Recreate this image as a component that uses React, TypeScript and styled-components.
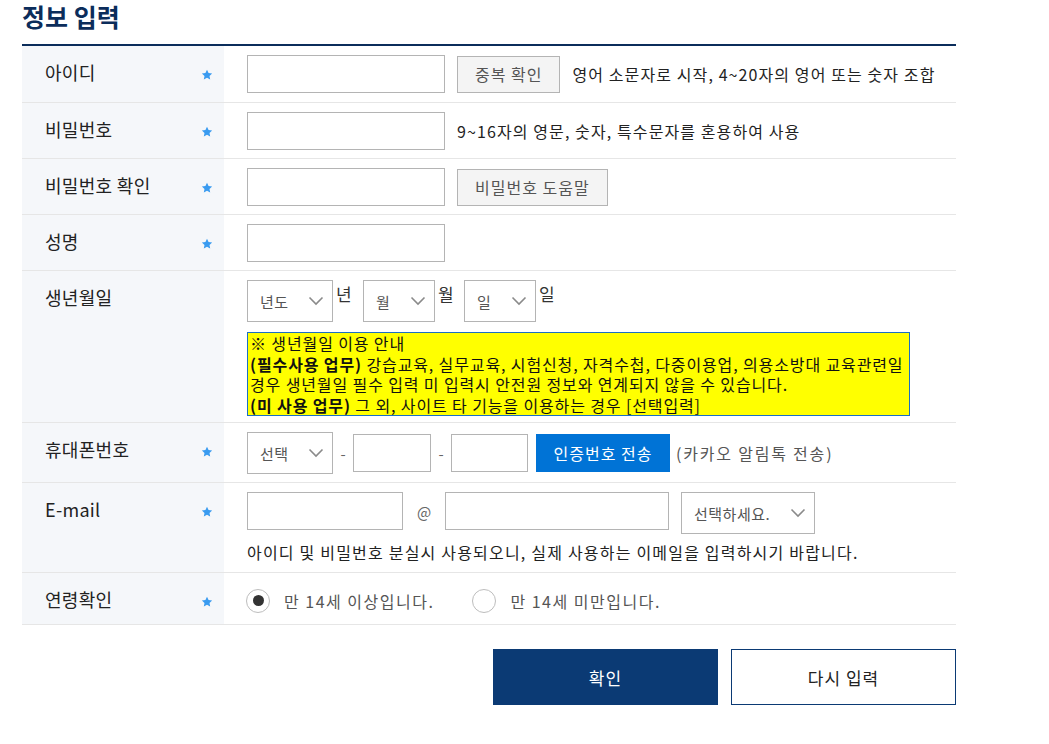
import React from 'react';
import styled, { createGlobalStyle } from 'styled-components';

const GlobalStyle = createGlobalStyle`
  html, body { margin: 0; padding: 0; background: #fff; }
  body {
    font-family: "Noto Sans CJK KR", "Noto Sans", sans-serif;
    color: #222;
  }
  * { box-sizing: border-box; }
`;

const Page = styled.div`
  width: 934px;
  margin-left: 22px;
`;

const Title = styled.h2`
  margin: 0;
  padding-top: 1px;
  font-size: 25px;
  font-weight: 700;
  line-height: 31px;
  color: #0b2d5b;
  margin-bottom: 12px;
`;

const Table = styled.div`
  border-top: 2px solid #0b2d5b;
`;

const Row = styled.div<{ h: number }>`
  display: flex;
  height: ${(p) => p.h}px;
  border-bottom: 1px solid #e6e6e6;
`;

const Label = styled.div`
  width: 202px;
  flex-shrink: 0;
  background: #f5f7fa;
  display: flex;
  justify-content: space-between;
  align-items: flex-start;
  padding: 15px 11px 0 23px;
  font-size: 18px;
  letter-spacing: 0.3px;
  line-height: 22px;
  color: #222;
`;

const Star = styled.span`
  display: flex;
  margin-top: 8px;
`;

const Cell = styled.div`
  flex: 1;
  padding: 9px 0 0 23px;
  display: flex;
  flex-direction: column;
  gap: 10px;
`;

const Line = styled.div`
  display: flex;
  align-items: center;
  gap: 12px;
`;

const Input = styled.div<{ w: number }>`
  width: ${(p) => p.w}px;
  height: 38px;
  border: 1px solid #b4b4b4;
  background: #fff;
  flex-shrink: 0;
`;

const GreyButton = styled.div`
  height: 37px;
  padding: 0 17px;
  border: 1px solid #b4b4b4;
  background: #f4f4f4;
  color: #555;
  font-size: 16px;
  letter-spacing: 1px;
  display: flex;
  align-items: center;
`;

const BlueButton = styled.div`
  height: 38px;
  width: 134px;
  margin-left: 8px;
  background: #0073d6;
  color: #fff;
  font-size: 16px;
  letter-spacing: 1px;
  display: flex;
  align-items: center;
  justify-content: center;
`;

const SelectBox = styled.div<{ w: number }>`
  width: ${(p) => p.w}px;
  height: 42px;
  border: 1px solid #b4b4b4;
  background: #fff;
  display: flex;
  align-items: center;
  justify-content: space-between;
  padding: 0 8px 0 12px;
  font-size: 15px;
  letter-spacing: 0.5px;
  color: #555;
  flex-shrink: 0;
`;

const DateLine = styled.div`
  display: flex;
  align-items: flex-start;
`;

const Unit = styled.span<{ w: number }>`
  width: ${(p) => p.w}px;
  padding-left: 3px;
  font-size: 17px;
  line-height: 28px;
  color: #333;
`;

const Notice = styled.div`
  width: 663px;
  background: #ffff00;
  border: 1px solid #1a6fc4;
  padding: 0 2px;
  font-size: 16px;
  letter-spacing: 0.88px;
  line-height: 20.5px;
  white-space: nowrap;
  color: #111;
  b { font-weight: 700; }
`;

const Dash = styled.span<{ w?: number }>`
  color: #666;
  font-size: 15px;
  width: ${(p) => p.w || 20}px;
  text-align: center;
  flex-shrink: 0;
`;

const At = styled(Dash)`
  line-height: 40px;
`;

const Note = styled.span<{ grey?: boolean }>`
  font-size: 16px;
  letter-spacing: ${(p) => (p.grey ? '1.8px' : '1.1px')};
  color: ${(p) => (p.grey ? '#555' : '#222')};
  white-space: nowrap;
`;

const Hint = styled(Note)`
  margin-left: 6px;
`;

const EmailHint = styled(Note)`
  margin-top: -4px;
  letter-spacing: 1.2px;
`;

const RadioGroup = styled.div`
  display: flex;
  align-items: center;
  height: 29px;
  margin-top: 4px;
  margin-left: -1px;
`;

const RadioItem = styled.label`
  display: flex;
  align-items: center;
  gap: 14px;
  font-size: 16px;
  letter-spacing: 1.5px;
  color: #555;
  margin-right: 38px;
`;

const RadioCircle = styled.span<{ checked?: boolean }>`
  width: 24px;
  height: 24px;
  border-radius: 50%;
  border: 1px solid #bdbdbd;
  display: flex;
  align-items: center;
  justify-content: center;
  &::after {
    content: '';
    width: 11px;
    height: 11px;
    border-radius: 50%;
    background: ${(p) => (p.checked ? '#333' : 'transparent')};
  }
`;

const Actions = styled.div`
  display: flex;
  justify-content: flex-end;
  gap: 13px;
  margin-top: 24px;
`;

const ActionButton = styled.div<{ primary?: boolean }>`
  width: 225px;
  height: 56px;
  display: flex;
  align-items: center;
  justify-content: center;
  font-size: 17px;
  letter-spacing: 1px;
  background: ${(p) => (p.primary ? '#0b3a74' : '#fff')};
  color: ${(p) => (p.primary ? '#fff' : '#222')};
  border: 1px solid #0b3a74;
`;

const StarIcon = () => (
  <svg width="12" height="12" viewBox="0 0 24 24">
    <path
      d="M12 1.5l3.1 6.6 7.2.9-5.3 5 1.4 7.1L12 17.6l-6.4 3.5L7 14l-5.3-5 7.2-.9z"
      fill="#3a9bf0"
    />
  </svg>
);

const Chevron = () => (
  <svg width="16" height="10" viewBox="0 0 16 10">
    <path d="M1.5 1.5l6.5 6.5 6.5-6.5" fill="none" stroke="#8a8a8a" strokeWidth="1.6" />
  </svg>
);

const Select: React.FC<{ w: number; text: string }> = ({ w, text }) => (
  <SelectBox w={w}>
    <span>{text}</span>
    <Chevron />
  </SelectBox>
);

const FieldLabel: React.FC<{ text: string; required?: boolean }> = ({ text, required = true }) => (
  <Label>
    <span>{text}</span>
    {required && (
      <Star>
        <StarIcon />
      </Star>
    )}
  </Label>
);

export default function App() {
  return (
    <Page>
      <GlobalStyle />
      <Title>정보 입력</Title>
      <Table>
        <Row h={57}>
          <FieldLabel text="아이디" />
          <Cell>
            <Line>
              <Input w={198} />
              <GreyButton>중복 확인</GreyButton>
              <Note>영어 소문자로 시작, 4~20자의 영어 또는 숫자 조합</Note>
            </Line>
          </Cell>
        </Row>
        <Row h={56}>
          <FieldLabel text="비밀번호" />
          <Cell>
            <Line>
              <Input w={198} />
              <Note>9~16자의 영문, 숫자, 특수문자를 혼용하여 사용</Note>
            </Line>
          </Cell>
        </Row>
        <Row h={56}>
          <FieldLabel text="비밀번호 확인" />
          <Cell>
            <Line>
              <Input w={198} />
              <GreyButton>비밀번호 도움말</GreyButton>
            </Line>
          </Cell>
        </Row>
        <Row h={56}>
          <FieldLabel text="성명" />
          <Cell>
            <Line>
              <Input w={198} />
            </Line>
          </Cell>
        </Row>
        <Row h={152}>
          <FieldLabel text="생년월일" required={false} />
          <Cell>
            <DateLine>
              <Select w={86} text="년도" />
              <Unit w={30}>년</Unit>
              <Select w={72} text="월" />
              <Unit w={29}>월</Unit>
              <Select w={72} text="일" />
              <Unit w={30}>일</Unit>
            </DateLine>
            <Notice>
              ※ 생년월일 이용 안내
              <br />
              <b>(필수사용 업무)</b> 강습교육, 실무교육, 시험신청, 자격수첩, 다중이용업, 의용소방대 교육관련일
              <br />
              경우 생년월일 필수 입력 미 입력시 안전원 정보와 연계되지 않을 수 있습니다.
              <br />
              <b>(미 사용 업무)</b> 그 외, 사이트 타 기능을 이용하는 경우 [선택입력]
            </Notice>
          </Cell>
        </Row>
        <Row h={60}>
          <FieldLabel text="휴대폰번호" />
          <Cell>
            <Line style={{ gap: 0 }}>
              <Select w={86} text="선택" />
              <Dash>-</Dash>
              <Input w={78} />
              <Dash>-</Dash>
              <Input w={77} />
              <BlueButton>인증번호 전송</BlueButton>
              <Hint grey>(카카오 알림톡 전송)</Hint>
            </Line>
          </Cell>
        </Row>
        <Row h={90}>
          <FieldLabel text="E-mail" />
          <Cell>
            <Line style={{ gap: 0, alignItems: 'flex-start' }}>
              <Input w={156} />
              <At w={42}>@</At>
              <Input w={224} />
              <span style={{ width: 12 }} />
              <Select w={134} text="선택하세요." />
            </Line>
            <EmailHint>아이디 및 비밀번호 분실시 사용되오니, 실제 사용하는 이메일을 입력하시기 바랍니다.</EmailHint>
          </Cell>
        </Row>
        <Row h={52}>
          <FieldLabel text="연령확인" />
          <Cell>
            <RadioGroup>
              <RadioItem>
                <RadioCircle checked />
                만 14세 이상입니다.
              </RadioItem>
              <RadioItem>
                <RadioCircle />
                만 14세 미만입니다.
              </RadioItem>
            </RadioGroup>
          </Cell>
        </Row>
      </Table>
      <Actions>
        <ActionButton primary>확인</ActionButton>
        <ActionButton>다시 입력</ActionButton>
      </Actions>
    </Page>
  );
}
